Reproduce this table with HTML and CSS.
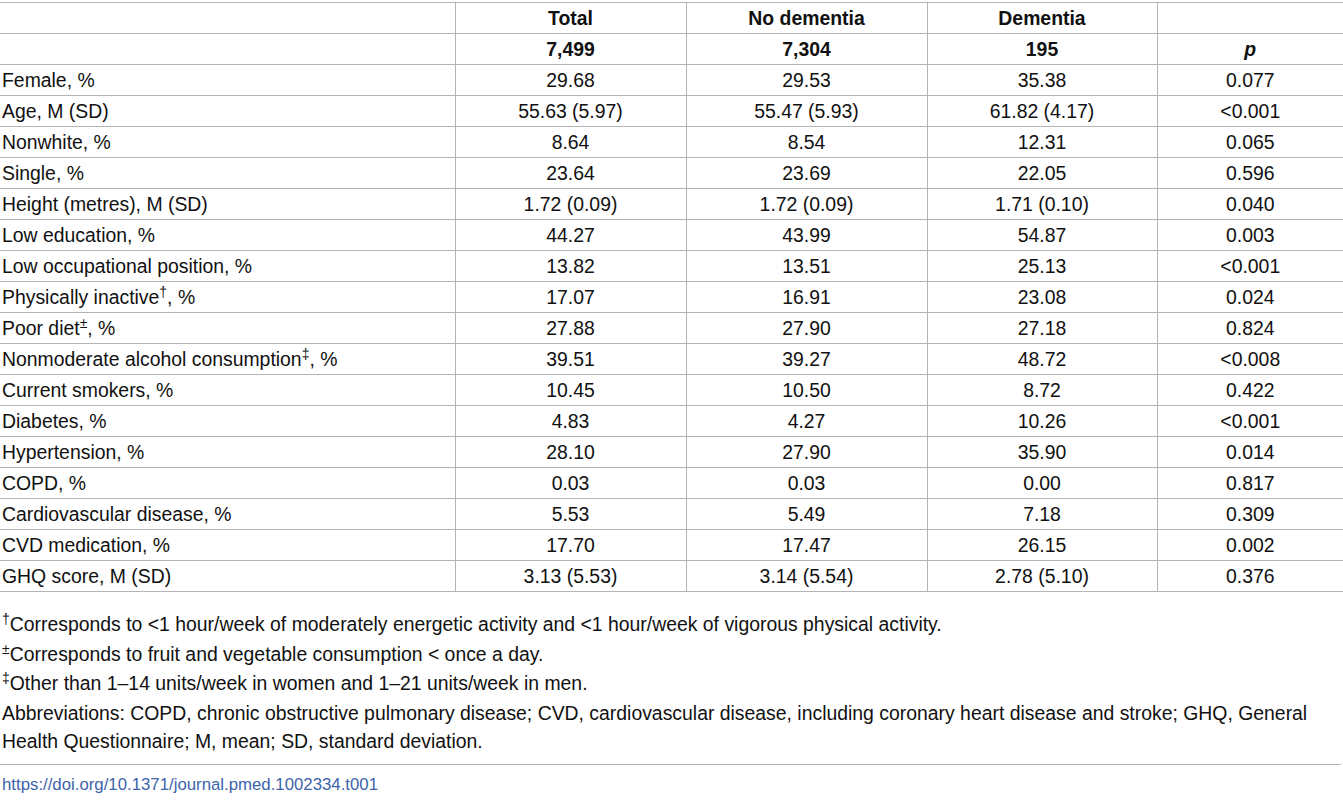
FILE: index.html
```html
<!DOCTYPE html>
<html lang="en">
<head>
  <meta charset="UTF-8" />
  <meta name="viewport" content="width=device-width, initial-scale=1" />
  <title>Table 1</title>
  <link rel="stylesheet" href="styles.css">
</head>
<body>

<div class="table-wrap">
  <table class="data-table">
    <colgroup>
      <col class="col-label">
      <col class="col-total">
      <col class="col-nodem">
      <col class="col-dem">
      <col class="col-p">
    </colgroup>
    <thead>
      <tr>
        <th></th>
        <th>Total</th>
        <th>No dementia</th>
        <th>Dementia</th>
        <th></th>
      </tr>
      <tr>
        <th></th>
        <th>7,499</th>
        <th>7,304</th>
        <th>195</th>
        <th><em>p</em></th>
      </tr>
    </thead>
    <tbody>
      <tr><td>Female, %</td><td>29.68</td><td>29.53</td><td>35.38</td><td>0.077</td></tr>
      <tr><td>Age, M (SD)</td><td>55.63 (5.97)</td><td>55.47 (5.93)</td><td>61.82 (4.17)</td><td>&lt;0.001</td></tr>
      <tr><td>Nonwhite, %</td><td>8.64</td><td>8.54</td><td>12.31</td><td>0.065</td></tr>
      <tr><td>Single, %</td><td>23.64</td><td>23.69</td><td>22.05</td><td>0.596</td></tr>
      <tr><td>Height (metres), M (SD)</td><td>1.72 (0.09)</td><td>1.72 (0.09)</td><td>1.71 (0.10)</td><td>0.040</td></tr>
      <tr><td>Low education, %</td><td>44.27</td><td>43.99</td><td>54.87</td><td>0.003</td></tr>
      <tr><td>Low occupational position, %</td><td>13.82</td><td>13.51</td><td>25.13</td><td>&lt;0.001</td></tr>
      <tr><td>Physically inactive<sup>†</sup>, %</td><td>17.07</td><td>16.91</td><td>23.08</td><td>0.024</td></tr>
      <tr><td>Poor diet<sup>±</sup>, %</td><td>27.88</td><td>27.90</td><td>27.18</td><td>0.824</td></tr>
      <tr><td>Nonmoderate alcohol consumption<sup>‡</sup>, %</td><td>39.51</td><td>39.27</td><td>48.72</td><td>&lt;0.008</td></tr>
      <tr><td>Current smokers, %</td><td>10.45</td><td>10.50</td><td>8.72</td><td>0.422</td></tr>
      <tr><td>Diabetes, %</td><td>4.83</td><td>4.27</td><td>10.26</td><td>&lt;0.001</td></tr>
      <tr><td>Hypertension, %</td><td>28.10</td><td>27.90</td><td>35.90</td><td>0.014</td></tr>
      <tr><td>COPD, %</td><td>0.03</td><td>0.03</td><td>0.00</td><td>0.817</td></tr>
      <tr><td>Cardiovascular disease, %</td><td>5.53</td><td>5.49</td><td>7.18</td><td>0.309</td></tr>
      <tr><td>CVD medication, %</td><td>17.70</td><td>17.47</td><td>26.15</td><td>0.002</td></tr>
      <tr><td>GHQ score, M (SD)</td><td>3.13 (5.53)</td><td>3.14 (5.54)</td><td>2.78 (5.10)</td><td>0.376</td></tr>
    </tbody>
  </table>
</div>

<div class="footnotes">
  <p><sup>†</sup>Corresponds to &lt;1 hour/week of moderately energetic activity and &lt;1 hour/week of vigorous physical activity.</p>
  <p><sup>±</sup>Corresponds to fruit and vegetable consumption &lt; once a day.</p>
  <p><sup>‡</sup>Other than 1–14 units/week in women and 1–21 units/week in men.</p>
  <p>Abbreviations: COPD, chronic obstructive pulmonary disease; CVD, cardiovascular disease, including coronary heart disease and stroke; GHQ, General Health Questionnaire; M, mean; SD, standard deviation.</p>
</div>

<div class="doi">
  <a href="#">https://doi.org/10.1371/journal.pmed.1002334.t001</a>
</div>

</body>
</html>
```

FILE: styles.css
```css
body {
  margin: 0;
  background-color: #fff;
  font-family: "Liberation Sans", Arial, Helvetica, sans-serif;
  color: #111;
}

.table-wrap {
  padding-top: 2px;
}

.data-table {
  width: 100%;
  border-collapse: collapse;
  table-layout: fixed;
  font-size: 19.4px;
}

.col-label { width: 455px; }
.col-total { width: 231px; }
.col-nodem { width: 241px; }
.col-dem { width: 230px; }
.col-p { width: 186px; }

.data-table th,
.data-table td {
  height: 30px;
  padding: 0 2px;
  border-top: 1px solid #b4b4b4;
  border-bottom: 1px solid #b4b4b4;
  border-left: 1px solid #b4b4b4;
  text-align: center;
  vertical-align: middle;
  white-space: nowrap;
  line-height: 22px;
}

.data-table th:first-child,
.data-table td:first-child {
  border-left: none;
  text-align: left;
}

.data-table th {
  font-weight: bold;
}

.data-table th em {
  font-style: italic;
}

sup {
  font-size: 0.72em;
  line-height: 0;
  vertical-align: 0.5em;
}

.footnotes {
  padding: 18px 2px 0;
  width: 1330px;
  font-size: 19.4px;
}

.footnotes p {
  margin: 0 0 1px;
  line-height: 28.5px;
}

.doi {
  margin-top: 8px;
  border-top: 1px solid #b4b4b4;
  padding: 10px 2px 0;
  margin-right: 2px;
}

.doi a {
  color: #3c64aa;
  text-decoration: none;
  font-size: 16.8px;
}
```
